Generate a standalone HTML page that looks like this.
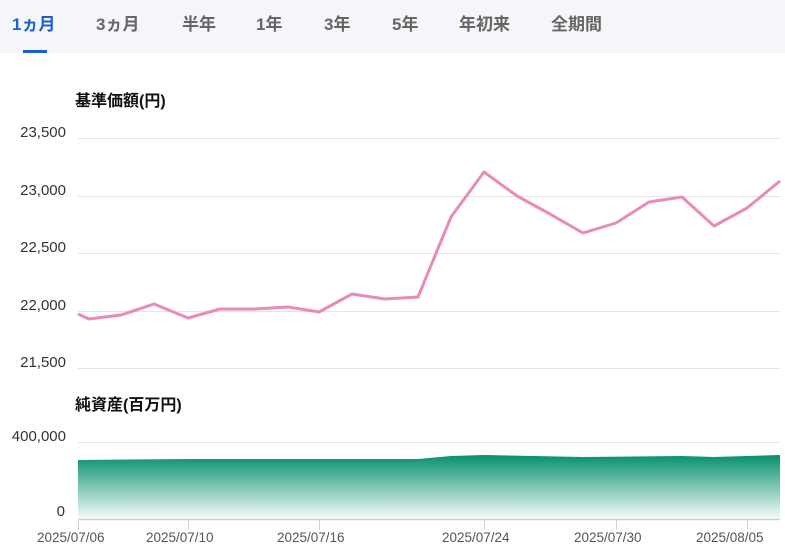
<!DOCTYPE html>
<html><head><meta charset="utf-8"><style>
body{margin:0;width:785px;height:551px;background:#fff;font-family:"Liberation Sans","Noto Sans CJK JP",sans-serif;overflow:hidden;position:relative}
.tabs{position:absolute;left:0;top:0;width:785px;height:53px;background:#f4f6f9}
.tab{position:absolute;top:10px;font-size:17px;font-weight:bold;color:#666}
.tab.a{color:#1a5fd0}
.ul{position:absolute;left:23px;top:50px;width:24px;height:3px;background:#1a5fd0}
.t{position:absolute;font-size:16px;font-weight:bold;color:#111}
.y{position:absolute;font-size:15px;color:#333;text-align:right;width:66px;left:0}
.x{position:absolute;top:530px;font-size:13.5px;color:#555}
</style></head><body>
<div class="tabs">
<span class="tab a" style="left:12px">1ヵ月</span>
<span class="tab" style="left:96px">3ヵ月</span>
<span class="tab" style="left:182px">半年</span>
<span class="tab" style="left:256px">1年</span>
<span class="tab" style="left:324px">3年</span>
<span class="tab" style="left:392px">5年</span>
<span class="tab" style="left:459px">年初来</span>
<span class="tab" style="left:551px">全期間</span>
</div>
<div class="ul"></div>
<div class="t" style="left:75px;top:87px">基準価額(円)</div>
<div class="y" style="top:124px">23,500</div>
<div class="y" style="top:182px">23,000</div>
<div class="y" style="top:239px">22,500</div>
<div class="y" style="top:297px">22,000</div>
<div class="y" style="top:354px">21,500</div>
<div class="t" style="left:75px;top:391px">純資産(百万円)</div>
<div class="y" style="top:428px">400,000</div>
<div class="y" style="top:503px;width:65px">0</div>
<svg width="785" height="551" style="position:absolute;left:0;top:0">
<defs><linearGradient id="g" x1="0" y1="0" x2="0" y2="1"><stop offset="0" stop-color="#06906c"/><stop offset="1" stop-color="#06906c" stop-opacity="0.03"/></linearGradient></defs>
<g stroke="#e4e4e4" stroke-width="1">
<line x1="78" x2="780" y1="138.5" y2="138.5"/><line x1="78" x2="780" y1="196.5" y2="196.5"/><line x1="78" x2="780" y1="253.5" y2="253.5"/><line x1="78" x2="780" y1="311.5" y2="311.5"/><line x1="78" x2="780" y1="368.5" y2="368.5"/><line x1="78" x2="780" y1="442.5" y2="442.5"/>
</g>
<polyline fill="none" stroke="#e88bb8" stroke-width="3" stroke-linejoin="round" points="78,314 89,319 121,315 154,304 188,318 220,309 255,309 288,307 319,312 352,294 385,299 418,297 451,217 484,172 517,196 550,214 583,233 616,223 649,202 682,197 714,226 747,208 780,181"/>
<path d="M78,460 L188,459 L319,459 L418,459 L451,456 L484,455 L583,457 L682,456 L714,457 L780,455 L780,519 L78,519Z" fill="url(#g)"/>
<line x1="78" x2="780" y1="519.5" y2="519.5" stroke="#ccd0e0" stroke-width="1.5"/>
<g stroke="#ccd0e0"><line x1="78.5" x2="78.5" y1="519" y2="530"/><line x1="188.5" x2="188.5" y1="519" y2="530"/><line x1="319.5" x2="319.5" y1="519" y2="530"/><line x1="484.5" x2="484.5" y1="519" y2="530"/><line x1="616.5" x2="616.5" y1="519" y2="530"/><line x1="747.5" x2="747.5" y1="519" y2="530"/></g>
</svg>
<div class="x" style="left:37px">2025/07/06</div>
<div class="x" style="left:146px">2025/07/10</div>
<div class="x" style="left:277px">2025/07/16</div>
<div class="x" style="left:442px">2025/07/24</div>
<div class="x" style="left:574px">2025/07/30</div>
<div class="x" style="left:696px">2025/08/05</div>
</body></html>
